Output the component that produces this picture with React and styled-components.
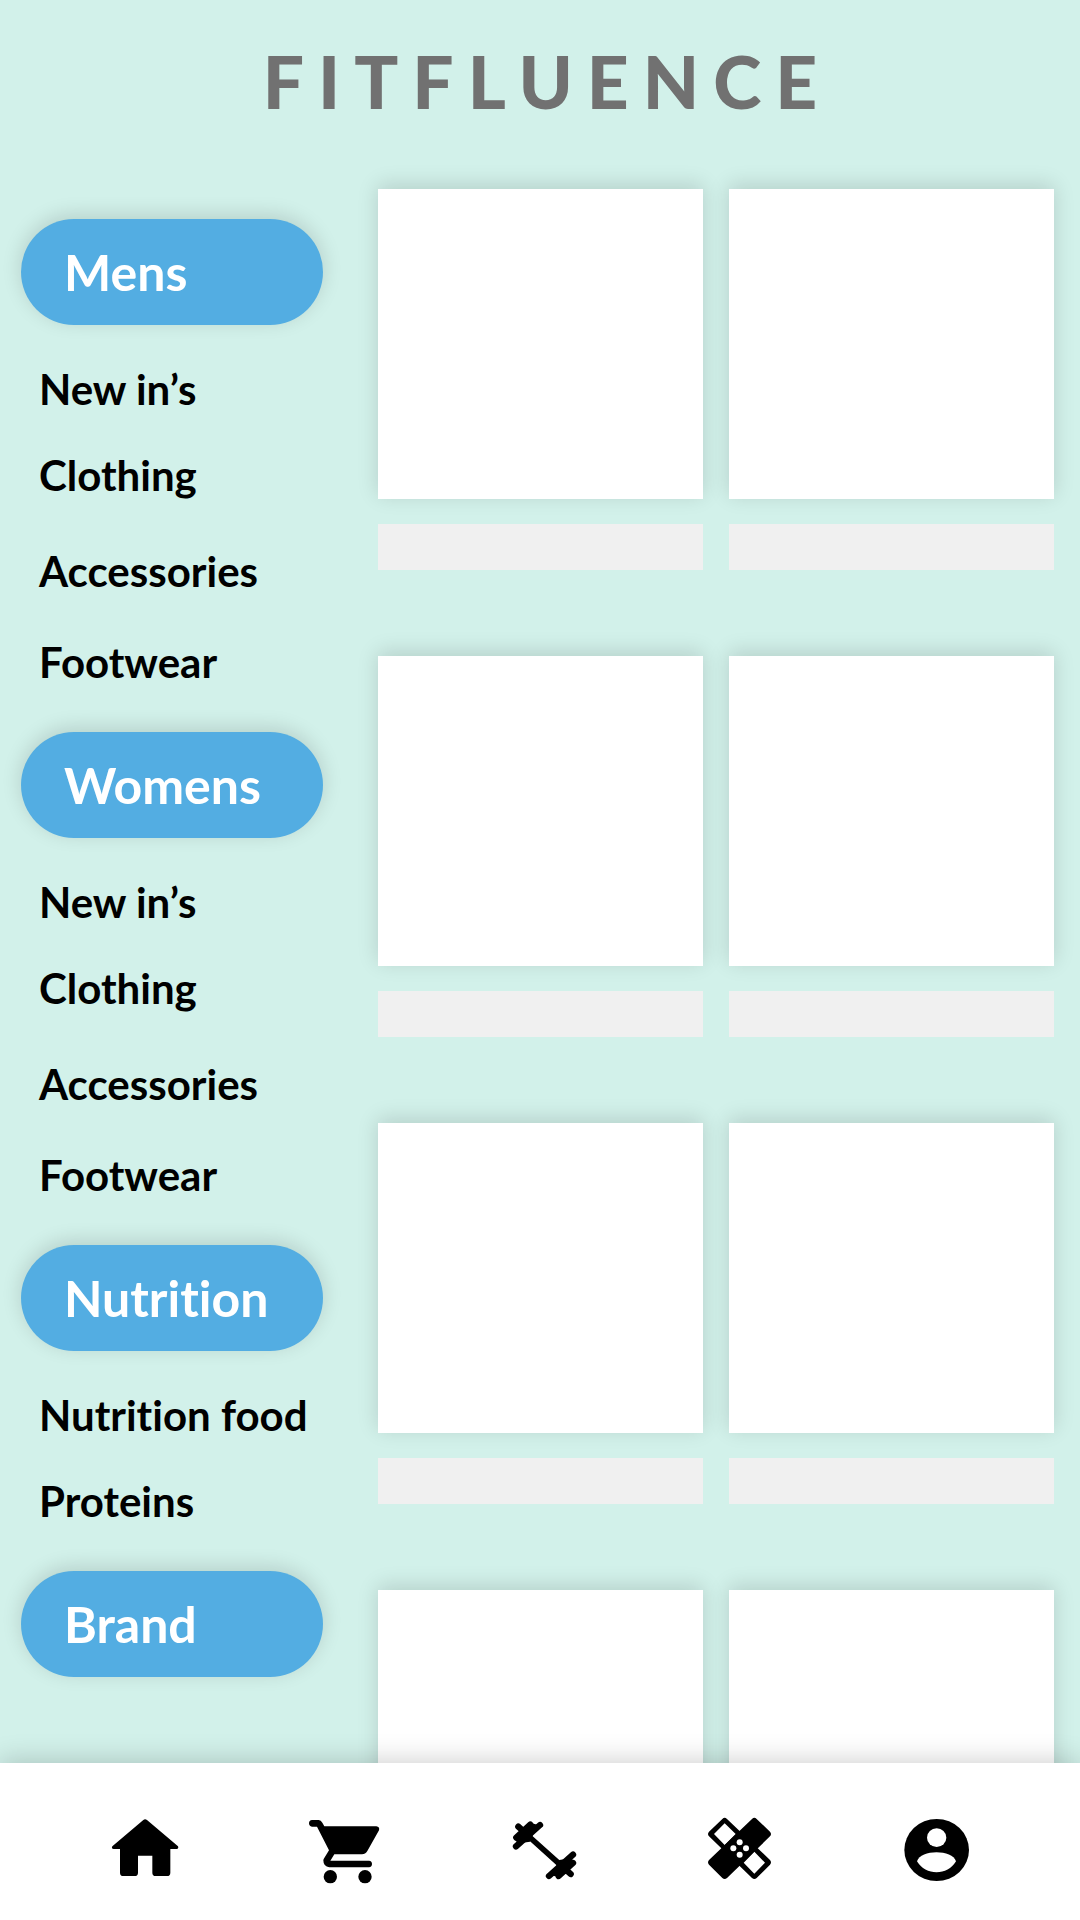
import React from 'react';
import styled, { createGlobalStyle } from 'styled-components';

const GlobalStyle = createGlobalStyle`
  *, *::before, *::after { box-sizing: border-box; }
  body { margin: 0; background: #d2f1ea; }
  h1, h2, ul { margin: 0; padding: 0; }
  ul { list-style: none; }
  a { color: inherit; text-decoration: none; }
`;

const shadow = '0 -4px 20px rgba(0, 0, 0, 0.14)';

const Screen = styled.div`
  display: flex;
  flex-direction: column;
  height: 100vh;
  overflow: hidden;
  background: #d2f1ea;
  color: #000;
  font-family: 'Trebuchet MS', Lato, 'Open Sans', sans-serif;
  font-variant-ligatures: none;
`;

const Header = styled.header`
  flex: none;
  padding: 37px 0 63px;
  text-align: center;
`;

const Logo = styled.h1`
  padding-left: 14px;
  color: #717171;
  font-family: Lato, sans-serif;
  font-size: 73px;
  line-height: 88px;
  font-weight: 900;
  letter-spacing: 14px;
`;

const Content = styled.div`
  flex: 1;
  min-height: 0;
  display: grid;
  grid-template-columns: 302px 1fr;
  column-gap: 55px;
  align-items: start;
  padding: 1px 26px 0 21px;
`;

const Sidebar = styled.nav`
  padding-top: 30px;
`;

const Section = styled.section`
  & + & { margin-top: 46px; }
`;

const Pill = styled.h2`
  display: flex;
  align-items: center;
  height: 106px;
  padding-left: 43px;
  border-radius: 53px;
  background: #53ade2;
  box-shadow: ${shadow};
  color: #fff;
  font-size: 50px;
  line-height: 60px;
  font-weight: 700;
`;

const Menu = styled.ul`
  padding: 40px 0 0 18px;
`;

const MenuItem = styled.li`
  font-size: 42px;
  line-height: 48px;
  font-weight: 700;
  white-space: nowrap;

  &:nth-child(2) { margin-top: 38px; }
  &:nth-child(3) { margin-top: 48px; }
  &:nth-child(4) { margin-top: 43px; }
`;

const Products = styled.main`
  display: grid;
  grid-template-columns: 1fr 1fr;
  column-gap: 26px;
  row-gap: 86px;
`;

const Photo = styled.div`
  height: 310px;
  background: #fff;
  box-shadow: ${shadow};
`;

const Caption = styled.div`
  height: 46px;
  margin-top: 25px;
  background: #f0f0f0;
`;

const TabBar = styled.nav`
  position: relative;
  flex: none;
  display: grid;
  grid-template-columns: repeat(5, 1fr);
  justify-items: center;
  padding: 51px 45px 34px;
  background: #fff;
  box-shadow: 0 -3px 25px rgba(0, 0, 0, 0.18);
`;

const Tab = styled.a`
  display: block;
  width: 72px;
  height: 72px;
`;

const Icon = styled.svg`
  display: block;
  width: 100%;
  height: 100%;
  overflow: visible;
`;

const sections = [
  { title: 'Mens', items: ['New in’s', 'Clothing', 'Accessories', 'Footwear'] },
  { title: 'Womens', items: ['New in’s', 'Clothing', 'Accessories', 'Footwear'] },
  { title: 'Nutrition', items: ['Nutrition food', 'Proteins'] },
  { title: 'Brand', items: [] },
];

const HomeIcon = () => (
  <Icon viewBox="84 222 216 216" aria-hidden="true">
    <path d="M190 240Q195 236 201 240L294 319Q297 326 290 327H271V398Q271 408 261 408H227Q217 408 217 398V347H174V398Q174 408 164 408H130Q120 408 120 398V327H101Q93 326 97 319Z" />
  </Icon>
);

const CartIcon = () => (
  <Icon viewBox="678 222 216 216" aria-hidden="true">
    <path d="M696 240H716Q723 240 727 248L733 259H889Q900 261 897 271L862 333Q856 343 846 343H763L751 362H867Q876 363 876 372Q876 381 867 382H748Q730 380 730 361L731 357L747 331L711 260H696Q687 259 687 250Q687 241 696 240Z" />
    <circle cx="751" cy="410" r="20" />
    <circle cx="855" cy="410" r="20" />
  </Icon>
);

const DumbbellIcon = () => (
  <Icon viewBox="72 72 216 216" aria-hidden="true">
    <g stroke="#000" strokeLinecap="round" fill="none">
      <path strokeWidth="17" d="M145 138L243 226" />
      <path strokeWidth="19" d="M108 169L180 105M115 110L136 129M109 143L151 104M118 151L160 114M207 258L279 194M236 258L279 219M226 249L268 212M250 232L272 252" />
    </g>
    <path d="M112 140L150 98L172 104L150 155L118 160ZM216 252L238 210L270 205L279 222L238 262Z" />
  </Icon>
);

const BandageIcon = () => (
  <Icon viewBox="66 72 216 216" aria-hidden="true">
    <path d="M127 87Q134 80 141 87L270 210Q276 217 270 224L230 264Q223 270 216 264L87 139Q81 132 87 125Z" />
    <path fill="#fff" d="M134 100L167 132L134 165L102 132ZM223 185L255 218L223 251L191 218Z" />
    <path d="M216 87Q223 80 230 87L270 125Q276 132 270 139L141 264Q134 270 127 264L87 224Q81 217 87 210Z" />
    <g fill="#fff">
      <circle cx="179" cy="157" r="9" />
      <circle cx="160" cy="175" r="9" />
      <circle cx="198" cy="175" r="9" />
      <circle cx="179" cy="194" r="9" />
    </g>
  </Icon>
);

const AccountIcon = () => (
  <Icon viewBox="60 72 216 216" aria-hidden="true">
    <ellipse cx="170" cy="180" rx="97" ry="93" />
    <ellipse fill="#fff" cx="170" cy="143" rx="29" ry="28" />
    <path fill="#fff" d="M111 214C122 178 217 178 228 214C203 258 136 258 111 214Z" />
  </Icon>
);

const tabs = [
  { label: 'Home', icon: HomeIcon },
  { label: 'Cart', icon: CartIcon },
  { label: 'Workouts', icon: DumbbellIcon },
  { label: 'Recovery', icon: BandageIcon },
  { label: 'Account', icon: AccountIcon },
];

export default function App() {
  return (
    <Screen>
      <GlobalStyle />
      <Header>
        <Logo>FITFLUENCE</Logo>
      </Header>
      <Content>
        <Sidebar>
          {sections.map(({ title, items }) => (
            <Section key={title}>
              <Pill><a href="#category">{title}</a></Pill>
              {items.length > 0 && (
                <Menu>
                  {items.map((item) => (
                    <MenuItem key={item}><a href="#products">{item}</a></MenuItem>
                  ))}
                </Menu>
              )}
            </Section>
          ))}
        </Sidebar>
        <Products>
          {Array.from({ length: 8 }, (_, i) => (
            <article key={i}>
              <Photo />
              <Caption />
            </article>
          ))}
        </Products>
      </Content>
      <TabBar>
        {tabs.map(({ label, icon: Glyph }) => (
          <Tab key={label} href="#tab" aria-label={label}><Glyph /></Tab>
        ))}
      </TabBar>
    </Screen>
  );
}
